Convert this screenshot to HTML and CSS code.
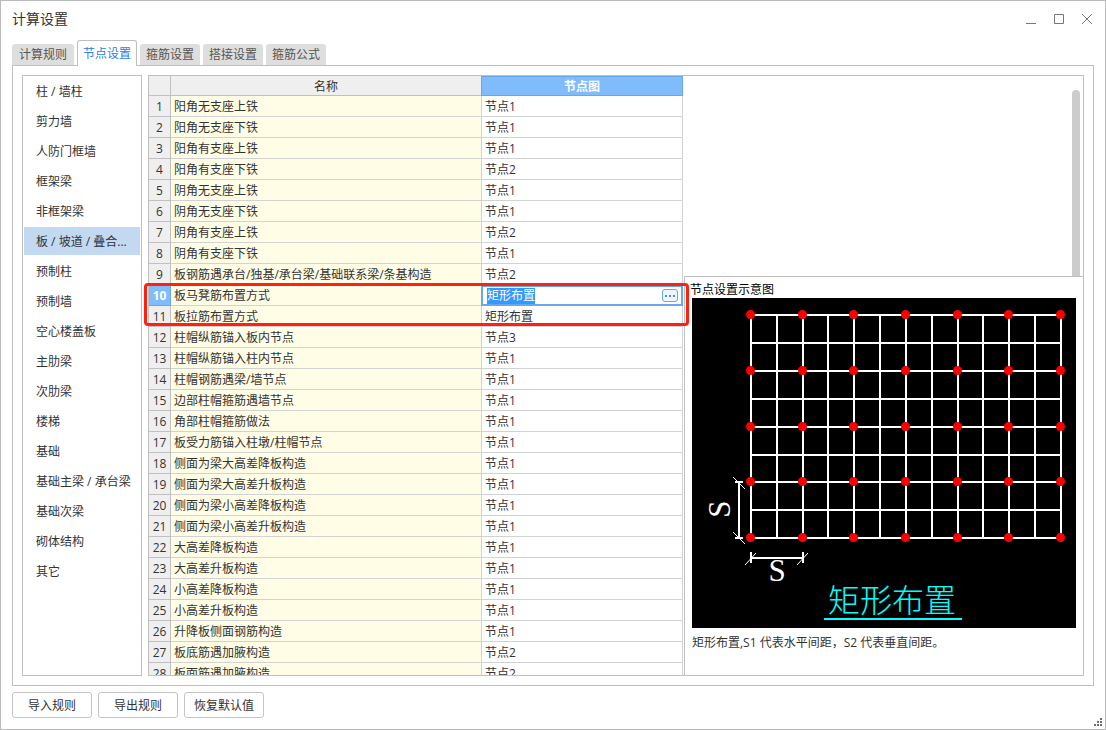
FILE: index.html
```html
<!DOCTYPE html>
<html lang="zh-CN">
<head>
<meta charset="utf-8">
<title>计算设置</title>
<link rel="stylesheet" href="styles.css">
</head>
<body>
<main class="window">
  <header class="titlebar">
    <h1 class="title">计算设置</h1>
    <div class="controls">
      <button class="control" aria-label="最小化"><svg width="12" height="12" viewBox="0 0 12 12"><path d="M1 10.500h10"/></svg></button>
      <button class="control" aria-label="最大化"><svg width="12" height="12" viewBox="0 0 12 12"><path d="M1.500 1.500h9v9h-9z"/></svg></button>
      <button class="control" aria-label="关闭"><svg width="12" height="12" viewBox="0 0 12 12"><path d="M1 1l10 10M11 1L1 11"/></svg></button>
    </div>
  </header>
  <nav class="tabs">
    <button class="tab tab-first">计算规则</button>
    <button class="tab tab-active">节点设置</button>
    <button class="tab">箍筋设置</button>
    <button class="tab">搭接设置</button>
    <button class="tab">箍筋公式</button>
  </nav>
  <section class="panel">
    <nav class="sidebar">
      <button class="item">柱 / 墙柱</button>
      <button class="item">剪力墙</button>
      <button class="item">人防门框墙</button>
      <button class="item">框架梁</button>
      <button class="item">非框架梁</button>
      <button class="item item-active">板 / 坡道 / 叠合...</button>
      <button class="item">预制柱</button>
      <button class="item">预制墙</button>
      <button class="item">空心楼盖板</button>
      <button class="item">主肋梁</button>
      <button class="item">次肋梁</button>
      <button class="item">楼梯</button>
      <button class="item">基础</button>
      <button class="item">基础主梁 / 承台梁</button>
      <button class="item">基础次梁</button>
      <button class="item">砌体结构</button>
      <button class="item">其它</button>
    </nav>
    <div class="content">
      <div class="grid-pane">
        <table class="grid">
          <colgroup><col class="col-number"><col class="col-name"><col class="col-node"></colgroup>
          <thead><tr><th class="head"></th><th class="head">名称</th><th class="head head-active">节点图</th></tr></thead>
          <tbody>
            <tr><th>1</th><td class="name">阳角无支座上铁</td><td>节点1</td></tr>
            <tr><th>2</th><td class="name">阳角无支座下铁</td><td>节点1</td></tr>
            <tr><th>3</th><td class="name">阳角有支座上铁</td><td>节点1</td></tr>
            <tr><th>4</th><td class="name">阳角有支座下铁</td><td>节点2</td></tr>
            <tr><th>5</th><td class="name">阴角无支座上铁</td><td>节点1</td></tr>
            <tr><th>6</th><td class="name">阴角无支座下铁</td><td>节点1</td></tr>
            <tr><th>7</th><td class="name">阴角有支座上铁</td><td>节点2</td></tr>
            <tr><th>8</th><td class="name">阴角有支座下铁</td><td>节点1</td></tr>
            <tr><th>9</th><td class="name">板钢筋遇承台/独基/承台梁/基础联系梁/条基构造</td><td>节点2</td></tr>
            <tr><th class="row-active">10</th><td class="name" id="row-10">板马凳筋布置方式</td><td class="edit-cell"><div class="editor"><input class="edit-input" type="text" value="矩形布置" aria-labelledby="row-10"><button class="more" aria-label="选择节点图"><svg width="10" height="4" viewBox="0 0 10 4"><path d="M0 1h2v2H0zM4 1h2v2H4zM8 1h2v2H8z"/></svg></button></div></td></tr>
            <tr><th>11</th><td class="name">板拉筋布置方式</td><td>矩形布置</td></tr>
            <tr><th>12</th><td class="name">柱帽纵筋锚入板内节点</td><td>节点3</td></tr>
            <tr><th>13</th><td class="name">柱帽纵筋锚入柱内节点</td><td>节点1</td></tr>
            <tr><th>14</th><td class="name">柱帽钢筋遇梁/墙节点</td><td>节点1</td></tr>
            <tr><th>15</th><td class="name">边部柱帽箍筋遇墙节点</td><td>节点1</td></tr>
            <tr><th>16</th><td class="name">角部柱帽箍筋做法</td><td>节点1</td></tr>
            <tr><th>17</th><td class="name">板受力筋锚入柱墩/柱帽节点</td><td>节点1</td></tr>
            <tr><th>18</th><td class="name">侧面为梁大高差降板构造</td><td>节点1</td></tr>
            <tr><th>19</th><td class="name">侧面为梁大高差升板构造</td><td>节点1</td></tr>
            <tr><th>20</th><td class="name">侧面为梁小高差降板构造</td><td>节点1</td></tr>
            <tr><th>21</th><td class="name">侧面为梁小高差升板构造</td><td>节点1</td></tr>
            <tr><th>22</th><td class="name">大高差降板构造</td><td>节点1</td></tr>
            <tr><th>23</th><td class="name">大高差升板构造</td><td>节点1</td></tr>
            <tr><th>24</th><td class="name">小高差降板构造</td><td>节点1</td></tr>
            <tr><th>25</th><td class="name">小高差升板构造</td><td>节点1</td></tr>
            <tr><th>26</th><td class="name">升降板侧面钢筋构造</td><td>节点1</td></tr>
            <tr><th>27</th><td class="name">板底筋遇加腋构造</td><td>节点2</td></tr>
            <tr><th>28</th><td class="name">板面筋遇加腋构造</td><td>节点2</td></tr>
          </tbody>
        </table>
      </div>
      <div class="side">
        <div class="side-top"><div class="scroll-thumb"></div></div>
        <figure class="preview">
          <h2 class="preview-title">节点设置示意图</h2>
          <svg class="diagram" width="384" height="330" viewBox="0 0 384 330">
            <rect width="384" height="330" fill="#000"/>
            <g class="wire">
              <path d="M59 16V241M85 16V241M111 16V241M136 16V241M162 16V241M188 16V241M214 16V241M240 16V241M266 16V241M291 16V241M317 16V241M343 16V241M369 16V241"/>
              <path d="M58 17H370M58 45H370M58 73H370M58 101H370M58 129H370M58 157H370M58 184H370M58 212H370M58 240H370"/>
              <path d="M47 184V240M43 184H51M43 240H51M59 260H111M59 254V265M111 254V265"/>
            </g>
            <path class="slash" d="M41 179L53 191M41 234L53 246M53 267L64 255M105 267L116 255"/>
            <path class="dots" d="M58.500 16.500h0M110.500 16.500h0M161.500 16.500h0M213.500 16.500h0M265.500 16.500h0M316.500 16.500h0M368.500 16.500h0M58.500 72.500h0M110.500 72.500h0M161.500 72.500h0M213.500 72.500h0M265.500 72.500h0M316.500 72.500h0M368.500 72.500h0M58.500 128.500h0M110.500 128.500h0M161.500 128.500h0M213.500 128.500h0M265.500 128.500h0M316.500 128.500h0M368.500 128.500h0M58.500 183.500h0M110.500 183.500h0M161.500 183.500h0M213.500 183.500h0M265.500 183.500h0M316.500 183.500h0M368.500 183.500h0M58.500 239.500h0M110.500 239.500h0M161.500 239.500h0M213.500 239.500h0M265.500 239.500h0M316.500 239.500h0M368.500 239.500h0"/>
            <text class="dimension" x="85" y="283">S</text>
            <text class="dimension" transform="translate(38 211) rotate(-90)">S</text>
            <text class="diagram-name" x="136" y="314">矩形布置</text>
            <path d="M132 321H270" stroke="#0ff" stroke-width="2"/>
          </svg>
          <figcaption class="note">矩形布置,S1 代表水平间距，S2 代表垂直间距。</figcaption>
        </figure>
      </div>
      <div class="highlight"></div>
    </div>
  </section>
  <footer class="footer">
    <button class="action">导入规则</button>
    <button class="action">导出规则</button>
    <button class="action">恢复默认值</button>
  </footer>
  <svg class="grip" width="8" height="8" viewBox="0 0 8 8"><path d="M6 0h2v2H6zM3 3h2v2H3zM6 3h2v2H6zM0 6h2v2H0zM3 6h2v2H3zM6 6h2v2H6z"/></svg>
</main>
</body>
</html>
```
FILE: styles.css
```css
* {
  box-sizing: border-box;
}

body {
  margin: 0;
  background: #fff;
  color: #333;
  font: 12px/20px "Open Sans", "Noto Sans CJK SC", sans-serif;
}

button,
input {
  margin: 0;
  padding: 0;
  border: 0;
  background: none;
  color: inherit;
  font: inherit;
}

.window {
  position: relative;
  display: flex;
  flex-direction: column;
  height: 100vh;
  padding: 0 11px 11px 11px;
  border: 1px solid #bbb;
}

.titlebar {
  display: flex;
  align-items: center;
  justify-content: space-between;
  height: 36px;
  flex: none;
}

.title {
  margin: 0;
  font-size: 14px;
  font-weight: 400;
}

.controls {
  display: flex;
  gap: 16px;
  padding-right: 1px;
}

.control {
  display: flex;
}

.control path {
  fill: none;
  stroke: #777;
}

.tabs {
  display: flex;
  align-items: flex-end;
  flex: none;
  gap: 3px;
  height: 29px;
  margin-bottom: -1px;
  z-index: 1;
}

.tab {
  width: 60px;
  height: 21px;
  margin-bottom: 1px;
  border-radius: 3px 3px 0 0;
  background: #dedede;
  color: #555;
}

.tab-first {
  width: 62px;
}

.tab-active {
  height: 26px;
  margin-bottom: 0;
  border: 1px solid #bfbfbf;
  border-bottom: 0;
  background: #fff;
  color: #2a7fe0;
}

.panel {
  display: flex;
  flex: 1;
  min-height: 0;
  gap: 6px;
  padding: 9px;
  border: 1px solid #c0c0c0;
}

.sidebar {
  display: flex;
  flex: none;
  flex-direction: column;
  gap: 2px;
  width: 120px;
  padding: 1px;
  border: 1px solid #c0c0c0;
  overflow: hidden;
}

.item {
  flex: none;
  height: 28px;
  padding: 2px 0 0 12px;
  text-align: left;
  white-space: nowrap;
}

.item-active {
  background: #c2d9f1;
}

.content {
  position: relative;
  display: flex;
  flex: 1;
  min-width: 0;
  border: 1px solid #c0c0c0;
}

.grid-pane {
  flex: none;
  width: 535px;
  overflow: hidden;
}

.grid {
  width: 534px;
  table-layout: fixed;
  border-collapse: separate;
  border-spacing: 0;
  line-height: 18px;
}

.col-number {
  width: 22px;
}

.col-name {
  width: 311px;
}

.grid th,
.grid td {
  height: 21px;
  padding: 2px 0 0 3px;
  border-right: 1px solid #d2d2d2;
  border-bottom: 1px solid #d2d2d2;
  white-space: nowrap;
}

.grid th {
  padding: 2px 0 0;
  border-color: #c0c0c0;
  background: #efefef;
  font-weight: 400;
}

.grid .head {
  height: 20px;
  line-height: 17px;
}

.grid .head-active {
  border-color: #68a8ea;
  background: #80bbfb;
  box-shadow: inset 0 1px #68a8ea, -1px 0 #68a8ea;
  color: #fff;
  font-weight: 700;
}

.grid .row-active {
  border-color: #68a8ea;
  background: #80bbfb;
  color: #fff;
  font-weight: 700;
}

.grid .name {
  background: #fffde6;
}

.grid .edit-cell {
  padding: 0;
  border: 0;
}

.editor {
  display: flex;
  align-items: center;
  justify-content: space-between;
  height: 21px;
  margin-left: -1px;
  padding: 0 3px 0 4px;
  border: 2px solid #68a8ea;
  background: #fff;
}

.edit-input {
  width: 48px;
  height: 16px;
  background: #3399ff;
  color: #fff;
  line-height: 16px;
}

.more {
  display: flex;
  align-items: center;
  justify-content: center;
  width: 16px;
  height: 13px;
  border: 1px solid #68a8ea;
  border-radius: 3px;
  background: #eef5fd;
}

.more path {
  fill: #4a90e2;
}

.side {
  display: flex;
  flex: 1;
  flex-direction: column;
  min-width: 0;
  overflow: hidden;
}

.side-top {
  display: flex;
  flex: none;
  justify-content: flex-end;
  height: 200px;
  padding: 14px 3px 0 0;
}

.scroll-thumb {
  width: 8px;
  border-radius: 4px 4px 0 0;
  background: #ccc;
}

.preview {
  display: flex;
  flex: 1;
  flex-direction: column;
  align-items: flex-start;
  margin: 0;
  padding: 4px 0 0 7px;
  border: 1px solid #c0c0c0;
  border-width: 1px 0 0 1px;
}

.preview-title {
  margin: 0 0 0 -2px;
  color: #000;
  font-size: 12px;
  font-weight: 400;
  line-height: 17px;
}

.diagram {
  flex: none;
}

.wire {
  fill: none;
  stroke: #fff;
  stroke-width: 2;
}

.slash {
  fill: none;
  stroke: #fff;
}

.dots {
  fill: none;
  stroke: #f00;
  stroke-linecap: round;
  stroke-width: 9;
}

.dimension {
  fill: #fff;
  font-family: "Liberation Serif", serif;
  font-size: 31px;
  text-anchor: middle;
}

.diagram-name {
  fill: #0ff;
  font-family: "Noto Sans CJK SC", sans-serif;
  font-size: 32px;
  font-weight: 300;
}

.note {
  margin-top: 5px;
}

.highlight {
  position: absolute;
  top: 207px;
  left: -5px;
  width: 545px;
  height: 43px;
  border: 3px solid #ff2010;
  border-radius: 4px;
  pointer-events: none;
}

.footer {
  display: flex;
  flex: none;
  gap: 6px;
  padding-top: 6px;
}

.action {
  width: 80px;
  height: 26px;
  padding-top: 2px;
  border: 1px solid #c4c4c4;
  border-radius: 3px;
  background: #fff;
}

.grip {
  position: absolute;
  right: 3px;
  bottom: 3px;
  fill: #6b7078;
}
```
